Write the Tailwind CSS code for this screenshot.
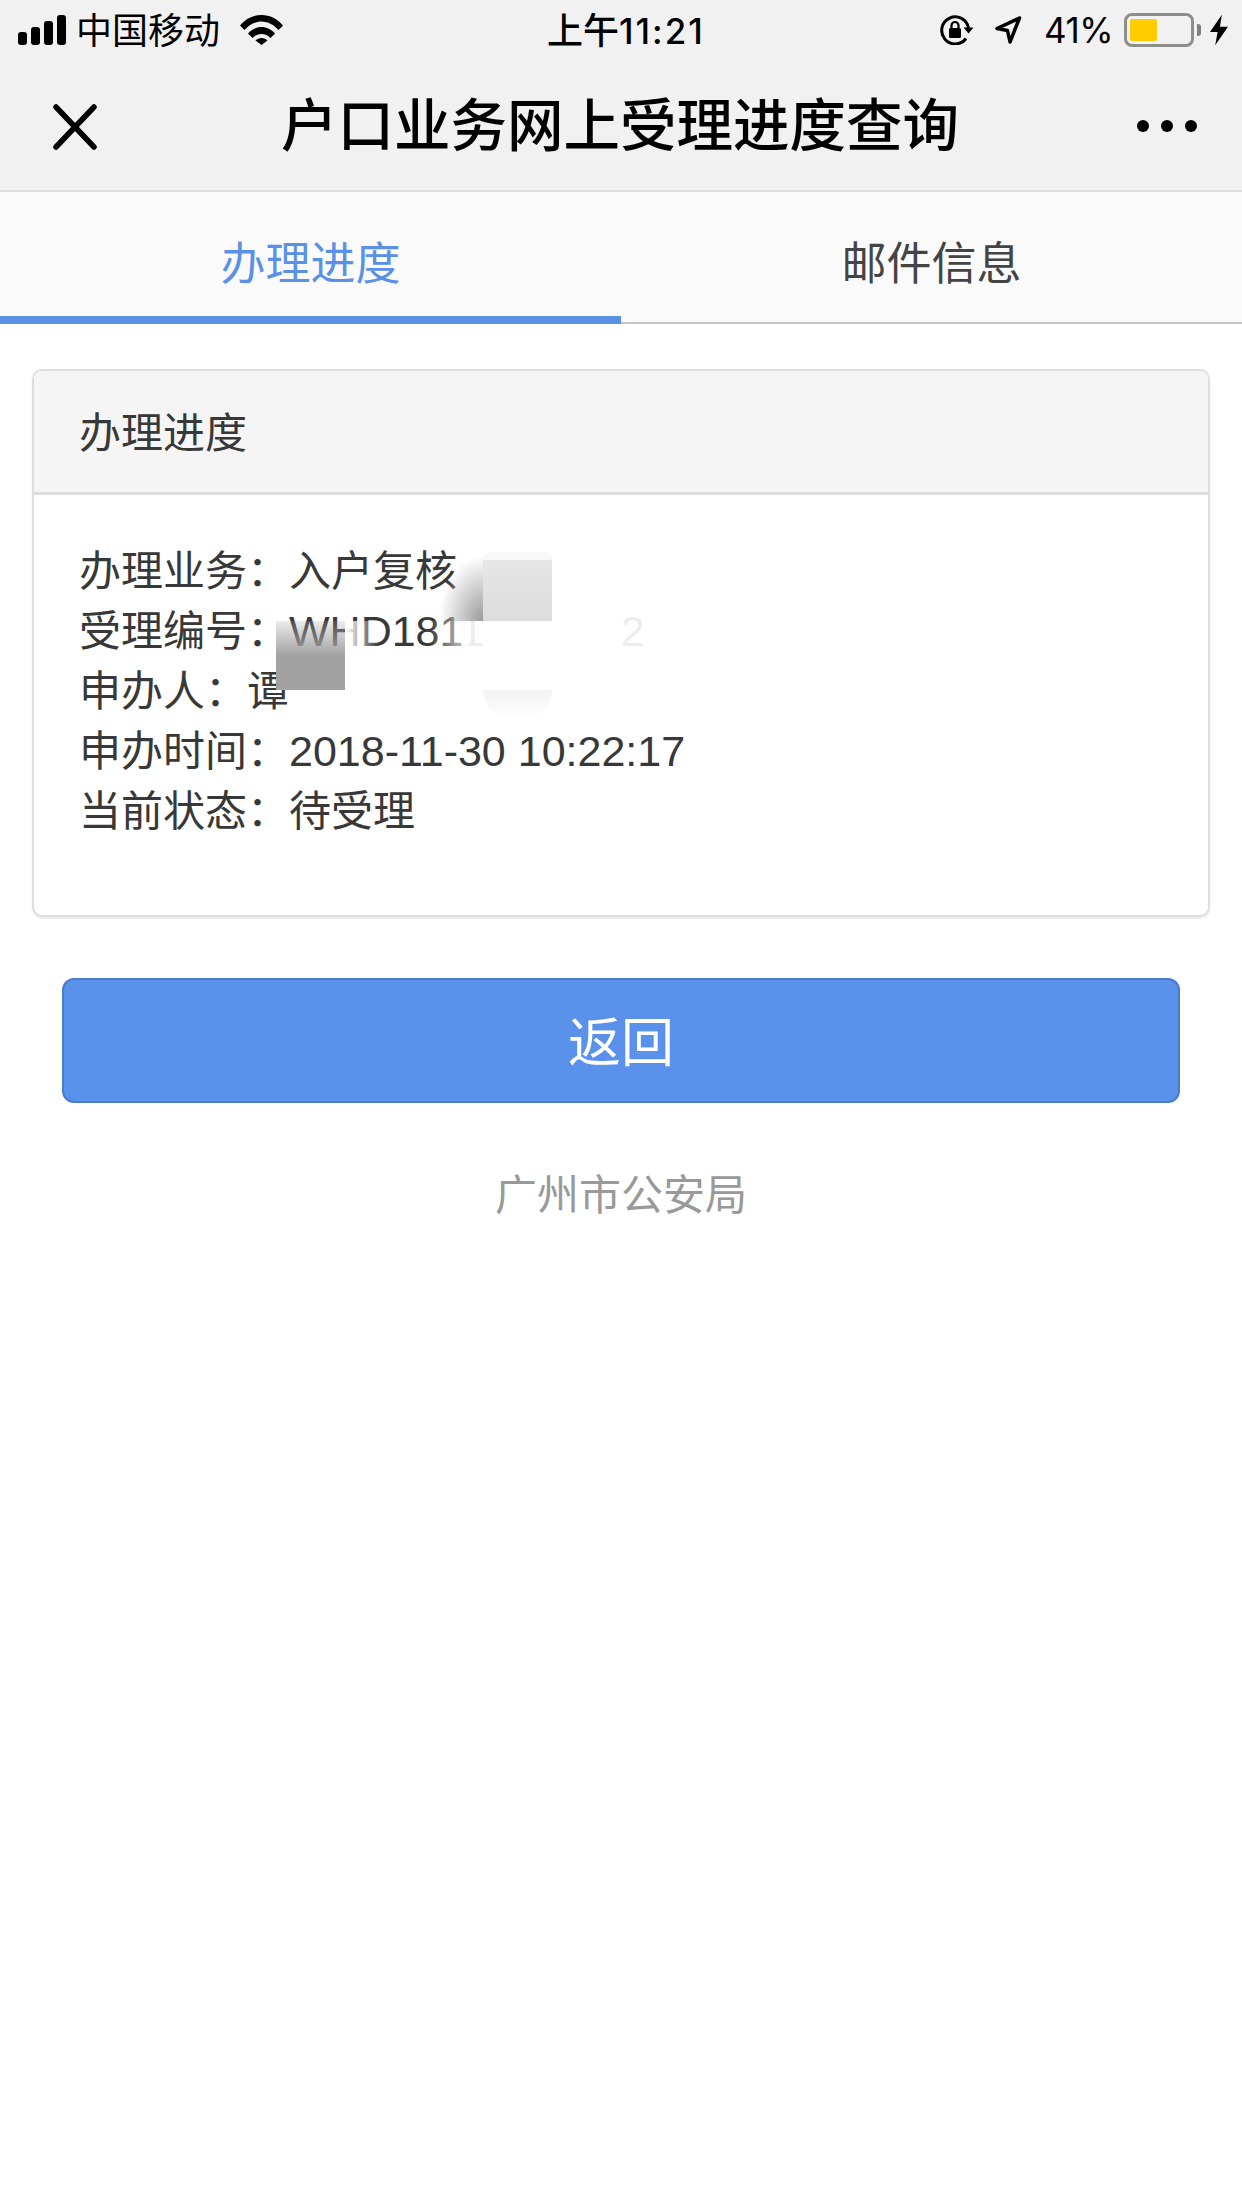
<!DOCTYPE html>
<html lang="zh-CN">
<head>
  <meta charset="UTF-8">
  <title>户口业务网上受理进度查询</title>
  <script src="https://cdn.jsdelivr.net/npm/@tailwindcss/browser@4"></script>
</head>
<body class="bg-white w-[1242px] h-[2208px] overflow-hidden font-['Liberation_Sans','Noto_Sans_CJK_SC',sans-serif] text-[#383838]">

  <!-- status bar + title bar -->
  <header class="bg-[#f1f1f1] h-[192px] border-b-2 border-[#dcdcdc] text-black">
    <div class="h-[60px] flex items-center justify-between relative pl-[18px] pr-[14px]">
      <div class="flex items-center">
        <svg class="w-[48px] h-[30px]" viewBox="0 0 48 30" fill="#000">
          <rect x="0" y="17" width="9" height="13" rx="3"/>
          <rect x="13" y="12" width="9" height="18" rx="3"/>
          <rect x="26" y="6" width="9" height="24" rx="3"/>
          <rect x="39" y="0" width="9" height="30" rx="3"/>
        </svg>
        <span class="text-[36px] ml-[10px] pt-[3px] leading-none">中国移动</span>
        <svg class="w-[43px] h-[30px] ml-[20px]" viewBox="0 0 43 30" fill="#000">
          <path d="M0 10.500C5.500 4 13 0 21.500 0S37.500 4 43 10.500L38.500 15C34 10 28 6.500 21.500 6.500S9 10 4.500 15Z"/>
          <path d="M8 18.500C11.500 14.500 16.500 12 21.500 12S31.500 14.500 35 18.500L30.500 23C28 20.500 25 19 21.500 19S15 20.500 12.500 23Z"/>
          <path d="M15.500 25.500C17 24 19 23 21.500 23S26 24 27.500 25.500L21.500 30Z"/>
        </svg>
      </div>
      <span class="absolute left-[547px] top-[9px] text-[36px] leading-[44px] font-medium">上午<span class="font-['Inter'] text-[35px] tracking-[2px]">11:21</span></span>
      <div class="flex items-center">
        <svg class="w-[34px] h-[30px]" viewBox="0 0 34 30" fill="none">
          <path d="M26 23.500A13.500 13.500 0 1 1 28.500 13" stroke="#000" stroke-width="3"/>
          <path d="M23.500 12.500L33.500 12.500L28.500 18.500Z" fill="#000"/>
          <rect x="9" y="13" width="12" height="10" rx="1.500" fill="#000"/>
          <path d="M11.500 13V10.500A3.500 3.500 0 0 1 18.500 10.500V13" stroke="#000" stroke-width="2.200"/>
        </svg>
        <svg class="w-[28px] h-[30px] ml-[20px]" viewBox="0 0 28 30" fill="none">
          <path d="M25.500 3L3 13.500L13.500 15.500L16 27Z" stroke="#000" stroke-width="3.500" stroke-linejoin="round"/>
        </svg>
        <span class="font-['Inter'] text-[35px] leading-none ml-[22px] tracking-[-0.5px]">41%</span>
        <div class="ml-[11px] w-[70px] h-[34px] rounded-[8px] border-[3px] border-[#8e8e8e] p-[3px]">
          <div class="w-[27px] h-full bg-[#ffcc00] rounded-[2px]"></div>
        </div>
        <div class="ml-[3px] w-[4px] h-[12px] bg-[#808080] rounded-r-[3px]"></div>
        <svg class="w-[18px] h-[32px] ml-[9px]" viewBox="0 0 19 32" fill="#000">
          <path d="M12.500 0L0 18H8L5.500 32L19 12.500H10.500Z"/>
        </svg>
      </div>
    </div>
    <div class="h-[128px] mt-[3px] flex items-center justify-between relative pl-[53px] pr-[45px]">
      <svg class="w-[44px] h-[46px]" viewBox="0 0 44 46" fill="none" stroke="#000" stroke-width="5.500" stroke-linecap="round">
        <path d="M3 3L41 43"/>
        <path d="M41 3L3 43"/>
      </svg>
      <h1 class="absolute inset-x-0 text-center text-[56.500px] leading-[64px] font-medium pr-[2px]">户口业务网上受理进度查询</h1>
      <div class="flex gap-[12px] mb-[3px]">
        <span class="w-[12px] h-[12px] rounded-full bg-black"></span>
        <span class="w-[12px] h-[12px] rounded-full bg-black"></span>
        <span class="w-[12px] h-[12px] rounded-full bg-black"></span>
      </div>
    </div>
  </header>

  <!-- tabs -->
  <nav class="bg-[#fafafa] h-[131px] grid grid-cols-2 text-[45px] text-center">
    <div class="border-b-[8px] border-[#5a91e6] text-[#5a91e6] pt-[22px] leading-[102px]">办理进度</div>
    <div class="border-b-2 border-[#c4c4c4] text-[#444] pt-[22px] leading-[102px]">邮件信息</div>
  </nav>

  <!-- card -->
  <section class="relative mt-[46px] mx-[32px] w-[1178px] h-[548px] border-2 border-[#dedede] rounded-[10px] shadow-[0_2px_2px_rgba(0,0,0,0.08)] text-[42px] overflow-hidden">
    <div class="h-[124px] bg-[#f5f5f5] border-b-[3px] border-[#dedede] pl-[45px] leading-[126px]">办理进度</div>
    <div class="pl-[45px] pt-[47px] leading-[60px]">
      <p>办理业务：入户复核</p>
      <p>受理编号：<span class="text-[43px] leading-[0]">WHD181<span class="text-[#383838]/10">1</span><span class="text-transparent ml-[17px]">00000</span><span class="text-[#383838]/10">2</span></span></p>
      <p>申办人：谭</p>
      <p>申办时间：<span class="text-[43px] leading-[0]">2018-11-30 10:22:17</span></p>
      <p>当前状态：待受理</p>
    </div>

    <!-- mosaic over the private details -->
    <div class="absolute left-[242px] top-[250px] w-[69px] h-[69px] bg-gradient-to-b from-[#a0a0a0]/20 to-[#a2a2a2] to-50%"></div>
    <div class="absolute left-[311px] top-[250px] w-[34px] h-[40px] bg-gradient-to-r from-white to-white/0"></div>
    <div class="absolute left-[395px] top-[250px] w-[40px] h-[40px] bg-gradient-to-r from-white/0 to-white/80"></div>
    <div class="absolute left-[405px] top-[184px] w-[44px] h-[66px] bg-[radial-gradient(ellipse_44px_66px_at_100%_100%,#999_0%,#c8c8c8_45%,rgba(255,255,255,0)_100%)]"></div>
    <div class="absolute left-[449px] top-[181px] w-[69px] h-[8px] rounded-t-[40px] bg-[#f8f8f8]"></div>
    <div class="absolute left-[449px] top-[189px] w-[69px] h-[61px] bg-gradient-to-b from-[#e6e6e6] to-[#dcdcdc]"></div>
    <div class="absolute left-[449px] top-[319px] w-[69px] h-[28px] rounded-b-[40px] bg-gradient-to-b from-[#f2f2f2] to-white"></div>
  </section>

  <!-- back button -->
  <button class="block mt-[61px] mx-[62px] w-[1118px] h-[125px] bg-[#5a91ea] border-2 border-[#4a7cc9] rounded-[12px] text-white text-[53px] pt-[6px]">返回</button>

  <footer class="mt-[63px] text-center text-[42px] leading-[60px] text-[#999]">广州市公安局</footer>

</body>
</html>
